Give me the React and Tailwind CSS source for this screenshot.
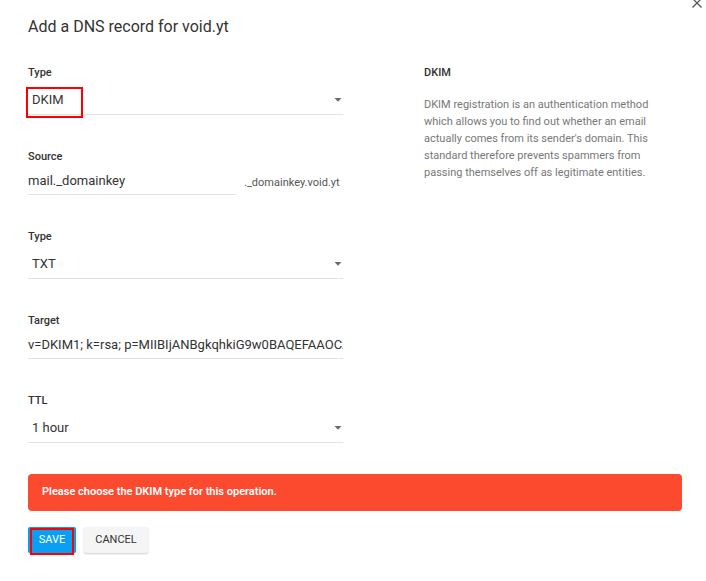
import React from "react";

// Add DNS record dialog — DKIM type with validation error.

function Caret() {
  return (
    <svg width="8" height="4" viewBox="0 0 8 4" className="shrink-0">
      <path d="M0.5 0 L7.5 0 L4 3.8 Z" fill="#6b6b6b" />
    </svg>
  );
}

function SelectField({ label, value, highlight }) {
  return (
    <div className="flex flex-col">
      <div className="text-[11px] leading-[16px] font-medium text-[#333]">{label}</div>
      <div className="relative mt-[9px] flex items-center justify-between border-b border-[#e3e3e3] pb-[4px] pl-[4px] pr-[1px]">
        <span className="text-[13px] leading-[20px] text-[#333]">{value}</span>
        <Caret />
        {highlight && (
          <span className="pointer-events-none absolute left-[-2px] top-[-3px] h-[31px] w-[57px] border-2 border-[#f00]" />
        )}
      </div>
    </div>
  );
}

function InputField({ label, value, suffix }) {
  return (
    <div className="flex flex-col">
      <div className="text-[11px] leading-[16px] font-medium text-[#333]">{label}</div>
      <div className="mt-[6px] flex items-end">
        <div className={`min-w-0 overflow-hidden border-b border-[#e3e3e3] pb-[3px] ${suffix ? "w-[208px] shrink-0" : "flex-1"}`}>
          <div className="whitespace-nowrap text-[13px] leading-[20px] text-[#333]">{value}</div>
        </div>
        {suffix && (
          <span className="ml-[8px] whitespace-nowrap pb-[5px] text-[11px] leading-[14px] text-[#555]">{suffix}</span>
        )}
      </div>
    </div>
  );
}

export default function App() {
  return (
    <div className="relative h-[581px] w-[706px] overflow-hidden bg-white font-['Roboto','Liberation_Sans',sans-serif]">
      <svg width="10" height="10" viewBox="0 0 10 10" className="absolute right-[4px] top-[-2px]">
        <path d="M0.5 0.5 L9.5 9.5 M9.5 0.5 L0.5 9.5" stroke="#555" strokeWidth="1.3" />
      </svg>

      <h1 className="pl-[28px] pt-[15px] text-[16px] leading-[24px] font-normal text-[#333]">
        Add a DNS record for void.yt
      </h1>

      <div className="mt-[26px] flex px-[28px]">
        <div className="flex w-[315px] flex-col gap-[34px]">
          <SelectField label="Type" value="DKIM" highlight />
          <InputField label="Source" value="mail._domainkey" suffix="._domainkey.void.yt" />
          <SelectField label="Type" value="TXT" />
          <InputField label="Target" value="v=DKIM1; k=rsa; p=MIIBIjANBgkqhkiG9w0BAQEFAAOCAQ8AMIIBCgKCAQEA" />
          <SelectField label="TTL" value="1 hour" />
        </div>

        <div className="ml-[81px] w-[236px]">
          <div className="text-[11px] leading-[16px] font-medium text-[#333]">DKIM</div>
          <p className="mt-[15px] text-[11px] leading-[17px] text-[#777]">
            DKIM registration is an authentication method which allows you to find out whether an email
            actually comes from its sender's domain. This standard therefore prevents spammers from passing
            themselves off as legitimate entities.
          </p>
        </div>
      </div>

      <div className="ml-[28px] mr-[24px] mt-[31px] flex h-[37px] items-center rounded-[4px] bg-[#fc4a2f] px-[14px] text-[11px] font-semibold text-white">
        Please choose the DKIM type for this operation.
      </div>

      <div className="mt-[16px] flex gap-[8px] pl-[28px]">
        <button className="relative h-[26px] w-[48px] rounded-[2px] bg-[#0a9ff5] text-[11px] text-white shadow-[0_1px_2px_rgba(0,0,0,0.2)]">
          SAVE
          <span className="pointer-events-none absolute left-[2px] top-[1px] h-[27px] w-[44px] border-2 border-[#f00]" />
        </button>
        <button className="h-[26px] w-[64px] rounded-[2px] bg-[#f5f5f5] text-[11px] text-[#333] shadow-[0_1px_2px_rgba(0,0,0,0.2)]">
          CANCEL
        </button>
      </div>
    </div>
  );
}
